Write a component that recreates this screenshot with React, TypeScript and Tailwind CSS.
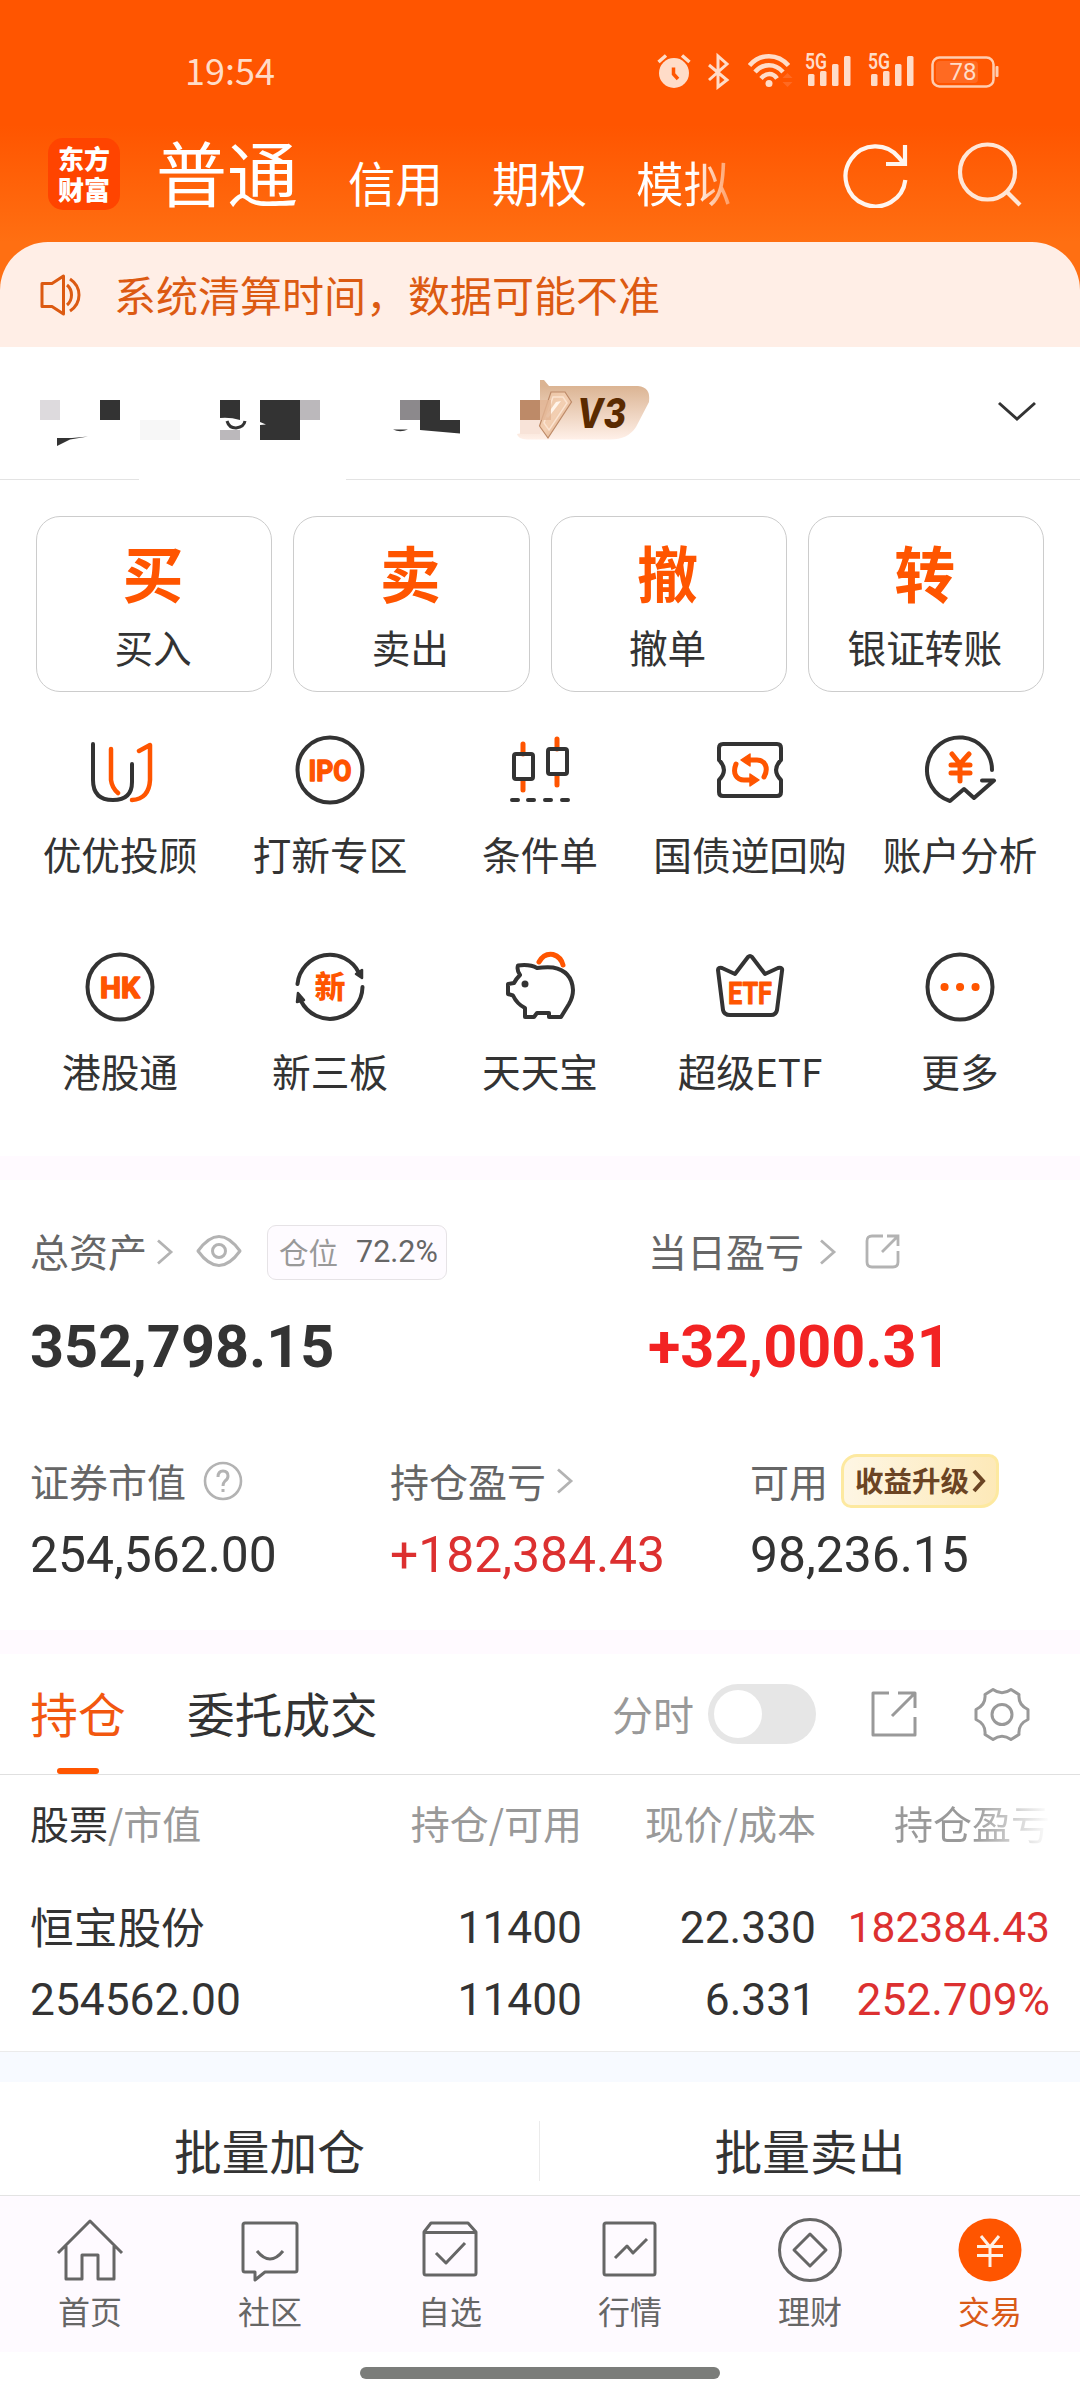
import type { ReactNode } from "react";
import clsx from "clsx";

const DARK = "#333333";
const ORANGE = "#ff5500";

const SIGNAL_BARS = [
  { x: 3, y: 20, h: 12 },
  { x: 15, y: 17, h: 15 },
  { x: 27, y: 10, h: 22 },
  { x: 39, y: 2, h: 30 },
];

const Signal = () => (
  <svg width="48" height="46" viewBox="0 -10 48 46" fill="#ffdcc8">
    {SIGNAL_BARS.map((b) => (
      <rect key={b.x} x={b.x} y={b.y} width="6.5" height={b.h} rx="1.5" />
    ))}
    <text x="0" y="15" fontSize="21.500" fontWeight="600" textLength="22" lengthAdjust="spacingAndGlyphs" fontFamily="Roboto">5G</text>
  </svg>
);

const StatusBar = () => (
  <div className="h-[120px] pt-[50px] flex items-start text-[#ffdcc8]">
    <span className="ml-[185px] -mt-[2px] w-[472px] h-[42px] leading-[42px] text-[36px]">19:54</span>
    <svg width="34" height="40" viewBox="0 0 34 40" fill="none" stroke="#ffdcc8">
      <circle cx="17" cy="23" r="15" fill="#ffdcc8" stroke="none" />
      <path d="M1.500 12L9 5.500M25 5.500L32.500 12" strokeWidth="3.500" />
      <path d="M16.500 17.500V24L21 29" stroke={ORANGE} strokeWidth="3.500" />
    </svg>
    <svg className="ml-[16px]" width="24" height="40" viewBox="0 0 24 40" fill="none" stroke="#ffdcc8" strokeWidth="3">
      <path d="M2 15L20 30L11 37V6L20 14L2 30" />
    </svg>
    <svg className="ml-[17px]" width="48" height="40" viewBox="0 0 48 40" fill="none" stroke="#ffdcc8" strokeWidth="4.500">
      <path d="M1.500 15.500C12 3 30 3 40.500 15.500M7 22C15 13 27 13 35 22M13 28.500C18 22.500 25 22.500 29 28.500" />
      <circle cx="21" cy="33.500" r="3.500" fill="#ffdcc8" stroke="none" />
      <path d="M34.500 28L39.500 23L44.500 28ZM34.500 32L39.500 37L44.500 32Z" fill="#ff6a22" stroke="none" />
    </svg>
    <div className="ml-[9px] -mt-[6px] flex gap-[15px]">
      <Signal />
      <Signal />
    </div>
    <svg className="ml-[15px] mt-[4px]" width="70" height="34" viewBox="0 0 70 34">
      <rect x="1.500" y="3.500" width="61" height="29" rx="7" fill="none" stroke="#ffcdb0" strokeWidth="2.500" />
      <rect x="5" y="7" width="42" height="22" rx="4" fill="#ff6a22" />
      <rect x="64.500" y="12" width="3" height="11" rx="1" fill="#ffcdb0" />
      <text x="32" y="26" textAnchor="middle" fontSize="24" fill="#ffdcc8" fontFamily="Roboto">78</text>
    </svg>
  </div>
);

const Header = () => (
  <div className="h-[122px] pt-[18px] flex items-start text-white">
    <div className="ml-[48px] size-[72px] rounded-[15px] bg-[#ff4400] flex items-center justify-center pb-[2px] text-[26px] leading-[31px] font-black">
      <span>东方<br />财富</span>
    </div>
    <div className="ml-[36px] -mt-[5px] w-[611px] h-[80px] flex items-end whitespace-nowrap leading-none">
      <span className="w-[192px] mb-[3px] text-[71px] leading-[80px]">普通</span>
      <span className="w-[144px] text-[47.500px] leading-[62px]">信用</span>
      <span className="w-[144px] text-[47.500px] leading-[62px]">期权</span>
      <span className="text-[47.500px] leading-[62px] bg-[linear-gradient(90deg,#fff_60%,#ff9a60_100%)] bg-clip-text text-transparent">模拟</span>
    </div>
    <svg className="ml-[76px] mt-[2px]" width="66" height="68" viewBox="0 0 66 68" fill="none" stroke="#fff5ee" strokeWidth="4.200">
      <path d="M62 42A30 30 0 1 1 57 19L62 26" transform="rotate(-4 33 36)" />
      <path d="M62 5V24H43" />
    </svg>
    <svg className="ml-[47px] mt-px" width="68" height="70" viewBox="0 0 68 70" fill="none" stroke="#ffe6d6" strokeWidth="4.200">
      <circle cx="31.500" cy="33" r="27.500" />
      <path d="M50 52L64 66" />
    </svg>
  </div>
);

const Notice = () => (
  <div className="h-[105px] rounded-t-[48px] bg-[#ffeee6] flex items-center text-[#dc5a12]">
    <svg className="ml-[38px]" width="46" height="48" viewBox="0 0 46 48" fill="none" stroke="#dc5a12" strokeWidth="3">
      <path d="M4 12.500H14L25.500 5V43L14 35.500H4Z" strokeLinejoin="round" />
      <path d="M29 14C35 19 35 29 29 34M32 8C44 16 44 32 32 40" />
    </svg>
    <span className="ml-[30px] -mt-[2px] text-[42px] leading-none">系统清算时间，数据可能不准</span>
  </div>
);

/* account name is masked with mosaic blocks */
const AccountRow = () => (
  <div className="h-[133px] flex flex-col justify-between">
    <div className="h-[132px] flex items-start">
      <svg className="mt-[23px]" width="660" height="80" viewBox="0 370 660 80">
        <defs>
          <linearGradient id="vip" x1="0" y1="0" x2="0" y2="1">
            <stop offset="0.1" stopColor="#dbb493" />
            <stop offset="1" stopColor="#fff0e8" />
          </linearGradient>
          <linearGradient id="gem" x1="0" y1="0" x2="1" y2="1">
            <stop offset="0" stopColor="#e8c2a2" />
            <stop offset="0.5" stopColor="#f3cfb2" />
            <stop offset="1" stopColor="#cf9a74" />
          </linearGradient>
        </defs>
        <rect x="40" y="400" width="20" height="20" fill="#dddadd" />
        <rect x="100" y="400" width="20" height="20" fill={DARK} />
        <path d="M57 438L72 438L88 436.500L70 439.500L57 446Z" fill={DARK} />
        <rect x="140" y="420" width="40" height="20" fill="#f7f7f7" />
        <path d="M220 400H240V420Q230 417 220 418Z" fill={DARK} />
        <path d="M227 421Q229 428 236 428Q244 427 245 421" fill="none" stroke={DARK} strokeWidth="3" />
        <rect x="220" y="430" width="20" height="10" fill="#bbb8bb" />
        <path d="M260 400H300V440H260V425L266 424.500L260 422Z" fill={DARK} />
        <rect x="300" y="400" width="20" height="20" fill="#bbb8bb" />
        <rect x="400" y="400" width="20" height="20" fill="#8c898c" />
        <path d="M420 400H440V420H460V433.500L420 430Z" fill={DARK} />
        <path d="M393 429.500Q400 433 408 429.500Z" fill={DARK} />
        <path d="M540 386V380H544L549 386H638Q651 387 649 402L636 427Q628 439.500 610 439.500H527Q518 439 517 434L540 430Z" fill="url(#vip)" />
        <rect x="520" y="420" width="20" height="14" fill="#f8e3d8" />
        <path d="M551 392L565 392L571.500 402L548 438L539.500 426Z" fill="url(#gem)" stroke="#bd8a68" strokeWidth="1.200" />
        <path d="M553 397L563 397L567 403L549 430L544 423Z" fill="none" stroke="#fbe3d0" strokeWidth="1.500" />
        <path d="M556 402L561 401L548 418L546 416Z" fill="#fff4ea" />
        <rect x="520" y="400" width="20" height="20" fill="#bd8a68" />
        <rect x="540" y="400" width="11" height="20" fill="#e2b493" fillOpacity="0.8" />
        <text x="577" y="428" fontSize="41" fontWeight="800" fontStyle="italic" fill="#5a2a00" fontFamily="Inter" textLength="49" lengthAdjust="spacingAndGlyphs">V3</text>
      </svg>
      <svg className="ml-[334px] mt-[52px]" width="46" height="26" viewBox="0 0 46 26" fill="none" stroke={DARK} strokeWidth="3">
        <path d="M5 4L23 20L41 4" />
      </svg>
    </div>
    <div className="flex justify-between">
      <i className="h-px w-[139px] bg-[#e3e3e3]" />
      <i className="h-px w-[734px] bg-[#e3e3e3]" />
    </div>
  </div>
);

const ACTIONS = [
  { glyph: "买", label: "买入" },
  { glyph: "卖", label: "卖出" },
  { glyph: "撤", label: "撤单" },
  { glyph: "转", label: "银证转账" },
];

const Actions = () => (
  <div className="mt-[36px] px-[36px] grid grid-cols-4 gap-[21px]">
    {ACTIONS.map((a) => (
      <div key={a.label} className="h-[176px] rounded-[24px] border border-[#cccccc] flex flex-col items-center">
        <span className="mt-[24px] mr-[2px] text-[61px] leading-[62px] font-bold text-[#ff5500]">{a.glyph}</span>
        <span className="mt-[23px] mr-[2px] text-[38.700px] leading-[40px] text-[#333333]">{a.label}</span>
      </div>
    ))}
  </div>
);

const Ring = ({ children }: { children: ReactNode }) => (
  <>
    <circle cx="40" cy="40" r="32.500" />
    {children}
  </>
);

const SHORTCUTS: { label: string; icon: ReactNode }[] = [
  {
    label: "优优投顾",
    icon: (
      <>
        <path d="M13 14V50Q13 70 33 70Q52 70 52 52V34" />
        <path d="M31 19V50Q32 58 38 63M59 21L70 15V50Q69 69 52 70" stroke={ORANGE} strokeWidth="4.500" />
      </>
    ),
  },
  {
    label: "打新专区",
    icon: (
      <Ring>
        <text x="40" y="50.500" textAnchor="middle" fontSize="30" fontWeight="700" fill={ORANGE} stroke={ORANGE} strokeWidth="1.500" textLength="43" lengthAdjust="spacingAndGlyphs" fontFamily="Roboto">IPO</text>
      </Ring>
    ),
  },
  {
    label: "条件单",
    icon: (
      <>
        <path d="M23 14V24M23 51V60M57 9V19M57 45V55" stroke={ORANGE} strokeWidth="5" />
        <rect x="14" y="24" width="19" height="25" rx="2" />
        <rect x="48" y="19" width="19" height="25" rx="2" />
        <path d="M12 70H18M28 70H34M45 70H51M62 70H68" />
      </>
    ),
  },
  {
    label: "国债逆回购",
    icon: (
      <>
        <path d="M13 14H67Q71 14 71 18V30Q61 40 71 50V62Q71 66 67 66H13Q9 66 9 62V50Q19 40 9 30V18Q9 14 13 14Z" />
        <path d="M26 34C22 44 27 50 34 50H42M54 47C59 38 55 30 47 30H38" stroke={ORANGE} strokeWidth="5" />
        <path d="M31 30L40 24V36ZM49 50L40 44V56Z" fill={ORANGE} stroke={ORANGE} strokeWidth="1.500" />
      </>
    ),
  },
  {
    label: "账户分析",
    icon: (
      <>
        <path d="M72 40A32.500 32.500 0 1 0 30 71L44 59L54 68L74 50.500H62" />
        <path d="M32 24L40 34L49 24M31 35H50M31 43H50M40 35V51" stroke={ORANGE} strokeWidth="5" />
      </>
    ),
  },
  {
    label: "港股通",
    icon: (
      <Ring>
        <text x="40" y="50.500" textAnchor="middle" fontSize="30" fontWeight="700" fill={ORANGE} stroke={ORANGE} strokeWidth="1.500" textLength="40" lengthAdjust="spacingAndGlyphs" fontFamily="Roboto">HK</text>
      </Ring>
    ),
  },
  {
    label: "新三板",
    icon: (
      <>
        <path d="M7.500 37A32.500 32.500 0 0 1 69 26M72.500 40A32.500 32.500 0 0 1 11 54" />
        <path d="M72 23V31L66 27ZM7 55L8 46L14 53Z" fill={DARK} strokeWidth="2.500" />
        <text x="40" y="51" textAnchor="middle" fontSize="31" fontWeight="900" fill={ORANGE} stroke="none">新</text>
      </>
    ),
  },
  {
    label: "天天宝",
    icon: (
      <>
        <path d="M37 21Q30 17 18 18.500Q16.500 23 20 28Q16 32 14 36L8 37V47L13 48.500Q17 57 25 61V70H34L37 66H49V70H61L69 57Q73 50 73 43Q72 24 53 20.500Q45 20 37 21Z" />
        <circle cx="25" cy="37" r="2.500" fill={DARK} strokeWidth="2" />
        <path d="M39 15Q44 6 53 7.500Q61 10 63 18" stroke={ORANGE} strokeWidth="5" />
      </>
    ),
  },
  {
    label: "超级ETF",
    icon: (
      <>
        <path d="M8 23Q8 20 12 21L25 27L38 10Q40 8 42 10L55 27L68 21Q73 20 72 24L67 63Q66 68 61 68H20Q14 68 13 63Z" />
        <text x="40" y="57" textAnchor="middle" fontSize="31" fontWeight="700" fill={ORANGE} stroke={ORANGE} strokeWidth="1" textLength="44" lengthAdjust="spacingAndGlyphs" fontFamily="Roboto">ETF</text>
      </>
    ),
  },
  {
    label: "更多",
    icon: (
      <Ring>
        <path d="M24.500 40H24.600M40 40H40.100M55.500 40H55.600" stroke={ORANGE} strokeWidth="8" />
      </Ring>
    ),
  },
];

const Shortcuts = () => (
  <div className="mt-[38px] h-[426px] px-[15px] grid grid-cols-5 auto-rows-[217px]">
    {SHORTCUTS.map((s) => (
      <div key={s.label} className="flex flex-col items-center">
        <svg width="80" height="80" viewBox="0 0 80 80" fill="none" stroke={DARK} strokeWidth="4" strokeLinecap="round" strokeLinejoin="round">
          {s.icon}
        </svg>
        <span className="mt-[23px] text-[38.700px] leading-[40px] whitespace-nowrap text-[#333333]">{s.label}</span>
      </div>
    ))}
  </div>
);

const Chevron = ({ className }: { className?: string }) => (
  <svg className={className} width="20" height="28" viewBox="0 0 20 28" fill="none" stroke="#b3b3b3" strokeWidth="2.800">
    <path d="M3 2.500L16 14L3 25.500" />
  </svg>
);

const Assets = () => (
  <div className="h-[450px] pl-[30px] text-[39px] leading-[40px] text-[#666666]">
    <div className="pt-[44px] flex">
      <div className="w-[618px] h-[56px] flex items-center">
        <span className="-mt-[4px]">总资产</span>
        <Chevron className="ml-[8px]" />
        <svg className="ml-[20px]" width="48" height="36" viewBox="0 0 48 36" fill="none" stroke="#b3b3b3" strokeWidth="3">
          <path d="M3 17Q24 -12 45 17Q24 46 3 17Z" strokeLinejoin="round" />
          <circle cx="24" cy="17" r="6.500" />
        </svg>
        <div className="ml-[24px] w-[180px] h-[55px] rounded-[9px] border border-[#e6e3e6] bg-[#fefbff] flex items-center pl-[11px] pb-[3px] text-[29.500px]">
          <span className="text-[#999999]">仓位</span>
          <span className="ml-[18px] mt-[2px] font-[Roboto] text-[30.500px]">72.2%</span>
        </div>
      </div>
      <div className="h-[56px] flex items-center">
        <span className="-mt-[4px]">当日盈亏</span>
        <Chevron className="ml-[14px]" />
        <svg className="ml-[26px]" width="38" height="38" viewBox="0 0 38 38" fill="none" stroke="#b3b3b3" strokeWidth="2.800">
          <path d="M19 3H8Q3 3 3 8V29Q3 34 8 34H29Q34 34 34 29V18M23 3H34V13M34 3L18 19" />
        </svg>
      </div>
    </div>
    <div className="mt-[37px] flex font-[Roboto] font-bold text-[59.400px] leading-[60px]">
      <span className="w-[618px] text-[#333333]">352,798.15</span>
      <span className="text-[#f22323]">+32,000.31</span>
    </div>
    <div className="mt-[77px] h-[54px] flex items-center">
      <div className="w-[360px] flex items-center">
        <span className="-mt-[3px]">证券市值</span>
        <svg className="ml-[16px]" width="42" height="42" viewBox="0 0 42 42" fill="none" stroke="#b3b3b3" strokeWidth="2.600">
          <circle cx="21" cy="21" r="18" />
          <path d="M16 17Q16 11 21 11Q26 11 26 16Q26 19 23 21Q21 23 21 26M21 29V32" strokeWidth="3" />
        </svg>
      </div>
      <div className="w-[360px] flex items-center">
        <span className="-mt-[3px]">持仓盈亏</span>
        <Chevron className="ml-[9px]" />
      </div>
      <span className="-mt-[3px]">可用</span>
      <div className="ml-[13px] w-[158px] h-[54px] rounded-tl-[16px] rounded-tr-[10px] rounded-bl-[10px] rounded-br-[18px] border-[3px] border-[#fde9a0] bg-[linear-gradient(90deg,#fef6e4,#fde9b8)] flex items-center pl-[11px] text-[28.500px] font-bold text-[#6b4423]">
        <span className="-mt-[3px]">收益升级</span>
        <svg className="ml-[3px]" width="14" height="26" viewBox="0 0 14 26" fill="none" stroke="#6b4423" strokeWidth="4">
          <path d="M2 3L11 13L2 23" />
        </svg>
      </div>
    </div>
    <div className="mt-[22px] flex font-[Roboto] text-[49.800px] leading-[50px] text-[#333333]">
      <span className="w-[360px]">254,562.00</span>
      <span className="w-[360px] text-[#dc3030]">+182,384.43</span>
      <span>98,236.15</span>
    </div>
  </div>
);

const Tabs = () => (
  <div className="h-[121px] border-b border-[#e0e0e0] pl-[30px] flex items-start text-[47.700px] text-[#333333]">
    <div className="w-[96px] flex flex-col items-center">
      <span className="mt-[29px] leading-[60px] text-[#f2570f]">持仓</span>
      <i className="mt-[25px] w-[42px] h-[6px] rounded-full bg-[#ff5500]" />
    </div>
    <span className="ml-[61px] mt-[29px] leading-[60px] w-[192px]">委托成交</span>
    <span className="ml-[233px] mt-[29px] leading-[60px] text-[41px] text-[#999999]">分时</span>
    <div className="ml-[14px] mt-[30px] w-[108px] h-[60px] rounded-full bg-[#e6e6e6] p-[6px]">
      <div className="size-[48px] rounded-full bg-white" />
    </div>
    <svg className="ml-[52px] mt-[34px]" width="52" height="52" viewBox="0 0 52 52" fill="none" stroke="#999999" strokeWidth="3">
      <path d="M21 5H5V47H47V29M30 5H47V20M47 5L24 28" strokeLinejoin="round" />
    </svg>
    <svg className="ml-[52px] mt-[31px]" width="60" height="60" viewBox="0 0 60 60" fill="none" stroke="#999999" strokeWidth="3" strokeLinejoin="round">
      <circle cx="30" cy="29.500" r="10" />
      <path d="M21 4.500Q30 11 39 4.500L47 9.500Q46 20 56 24.500V34.500Q46 39 47 49.500L39 54.500Q30 48 21 54.500L13 49.500Q14 39 4 34.500V24.500Q14 20 13 9.500Z" />
    </svg>
  </div>
);

const COLS = "grid grid-cols-[250px_302px_234px_234px] pl-[30px]";

const ROWS = [
  { top: true, cells: ["恒宝股份", "11400", "22.330", "182384.43"] },
  { top: false, cells: ["254562.00", "11400", "6.331", "252.709%"] },
];

const Holdings = () => (
  <div className="h-[277px] border-b border-[#ebebeb]">
    <div className={clsx(COLS, "pt-[25px] text-[39px] leading-[44px] text-[#999999] text-right")}>
      <span className="text-left"><span className="text-[#333333]">股票</span>/市值</span>
      <span>持仓/可用</span>
      <span>现价/成本</span>
      <span><span className="bg-[linear-gradient(90deg,#999_50%,#fff_100%)] bg-clip-text text-transparent">持仓盈亏</span></span>
    </div>
    <div className="pt-[54px] flex flex-col gap-[12px]">
      {ROWS.map((row) => (
        <div key={row.cells[0]} className={clsx(COLS, "h-[60px] items-center font-[Roboto] text-[44.300px] leading-[60px] text-[#333333] text-right")}>
          <span className={row.top ? "-mt-[7px] text-left font-['Noto_Sans_CJK_SC'] text-[43.700px]" : "text-left"}>{row.cells[0]}</span>
          <span>{row.cells[1]}</span>
          <span>{row.cells[2]}</span>
          <span className={row.top ? "text-[42.500px] text-[#dc3030]" : "text-[#dc3030]"}>{row.cells[3]}</span>
        </div>
      ))}
    </div>
  </div>
);

const NAV: { label: string; active?: boolean; icon: ReactNode }[] = [
  { label: "首页", icon: <path d="M4 37L36 5L68 37M12 30V63H28V39H44V63H60V30" /> },
  {
    label: "社区",
    icon: (
      <>
        <path d="M11 7H61Q63 7 63 9V54Q63 56 61 56H31L21 64V56H11Q9 56 9 54V9Q9 7 11 7Z" />
        <path d="M23 35Q36 51 49 35" />
      </>
    ),
  },
  {
    label: "自选",
    icon: (
      <>
        <path d="M10 16L17 7H54L62 16V57Q62 59 60 59H12Q10 59 10 57ZM10 16.500H62" />
        <path d="M22 37L32 47L51 27" />
      </>
    ),
  },
  {
    label: "行情",
    icon: (
      <>
        <rect x="10" y="7" width="51" height="52" rx="2" />
        <path d="M21 42L33 30L39 37L53 23" />
      </>
    ),
  },
  {
    label: "理财",
    icon: (
      <>
        <circle cx="36" cy="34" r="30.500" />
        <path d="M36 18L52 34L36 50L20 34Z" />
      </>
    ),
  },
  {
    label: "交易",
    active: true,
    icon: (
      <>
        <circle cx="36" cy="34" r="31.500" fill={ORANGE} stroke="none" />
        <path d="M27 20L36 31L45 20M23 30.500H49M23 39.500H49M36 30V51" stroke="#fff0e6" />
      </>
    ),
  },
];

const BottomNav = () => (
  <div className="h-[157px] border-t border-[#e3e3e3] bg-[#fefaff] grid grid-cols-6">
    {NAV.map((n) => (
      <div key={n.label} className="pt-[20px] flex flex-col items-center">
        <svg width="72" height="68" viewBox="0 0 72 68" fill="none" stroke="#666666" strokeWidth="3" strokeLinejoin="round">
          {n.icon}
        </svg>
        <span className={clsx("mt-[6px] text-[32px] leading-[40px]", n.active ? "text-[#d95a18]" : "text-[#666666]")}>{n.label}</span>
      </div>
    ))}
  </div>
);

export default function App() {
  return (
    <div className="w-[1080px] h-[2400px] overflow-hidden bg-white font-['Noto_Sans_CJK_SC',sans-serif]">
      <div className="h-[347px] bg-[linear-gradient(180deg,#ff5500_0px,#ff5500_125px,#ff6f12_242px)]">
        <StatusBar />
        <Header />
        <Notice />
      </div>
      <AccountRow />
      <Actions />
      <Shortcuts />
      <div className="h-[24px] bg-[#fffaff]" />
      <Assets />
      <div className="h-[24px] bg-[#fffaff]" />
      <Tabs />
      <Holdings />
      <div className="h-[30px] bg-[#f7faff]" />
      <div className="h-[113px] flex items-center text-[47.700px] text-[#333333]">
        <span className="w-[539px] mt-[23px] leading-[60px] text-center">批量加仓</span>
        <i className="w-px h-[60px] mt-[24px] bg-[#ebebeb]" />
        <span className="w-[540px] mt-[23px] leading-[60px] text-center">批量卖出</span>
      </div>
      <BottomNav />
      <div className="pt-[15px] flex justify-center">
        <div className="w-[360px] h-[12px] rounded-full bg-[#7b7d7a]" />
      </div>
    </div>
  );
}
